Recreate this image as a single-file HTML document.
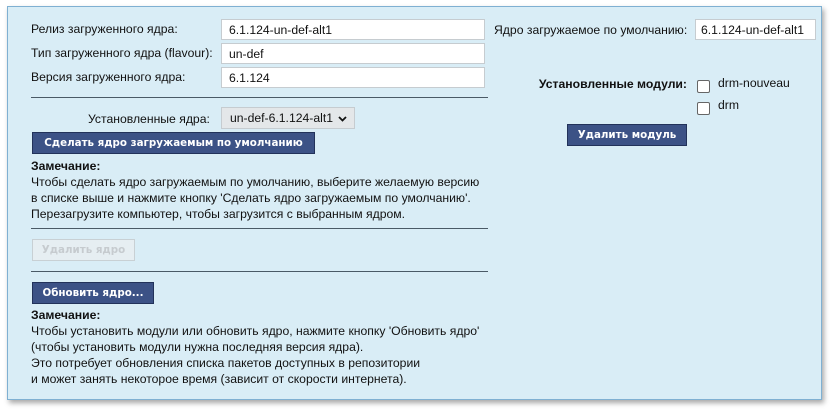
<!DOCTYPE html>
<html><head><meta charset="utf-8"><style>
*{box-sizing:border-box;margin:0;padding:0}
body{width:835px;height:413px;background:#fff;font-family:"Liberation Sans",sans-serif;font-size:12.2px;color:#111;position:relative;overflow:hidden}
.panel{position:absolute;left:7px;top:6px;width:815px;height:394px;background:#d9edf6;border:1px solid #7fb0d2;box-shadow:2px 3px 5px rgba(0,0,0,.35)}
.a{position:absolute;white-space:nowrap}
.inp{position:absolute;background:#fff;border:1px solid #c6ccd0;height:21px;padding-left:7px;line-height:20px}
.hr{position:absolute;height:1px;background:#4a5a66}
.btn{position:absolute;background:#3c5286;border:1px solid #22325a;color:#fff;font-family:"DejaVu Sans",sans-serif;font-weight:bold;font-size:10.3px;text-align:center;line-height:20px}
.dis{position:absolute;background:#e6eef2;border:1px solid #c8d0d4;color:#c6cbcf;font-family:"DejaVu Sans",sans-serif;font-weight:bold;font-size:10.3px;text-align:center;line-height:20px}
.cb{position:absolute;width:13px;height:13px;border:1px solid #666;border-radius:2px;background:#fff}
.t{line-height:16px}
</style></head><body>
<div class="panel"></div>
<div class="a" style="left:31px;top:22px">Релиз загруженного ядра:</div>
<div class="a" style="left:31px;top:46px">Тип загруженного ядра (flavour):</div>
<div class="a" style="left:31px;top:70px">Версия загруженного ядра:</div>
<div class="inp" style="left:221px;top:19px;width:264px">6.1.124-un-def-alt1</div>
<div class="inp" style="left:221px;top:43px;width:264px">un-def</div>
<div class="inp" style="left:221px;top:67px;width:264px">6.1.124</div>
<div class="hr" style="left:31px;top:97px;width:457px"></div>
<div class="a" style="left:88px;top:112px">Установленные ядра:</div>
<div class="a" style="left:221px;top:107px;width:134px;height:22px;background:#e4e7e9;border:1px solid #c6ccd0;padding-left:8px;line-height:21px">un-def-6.1.124-alt1<svg style="position:absolute;right:7px;top:8px" width="9" height="6" viewBox="0 0 9 6"><path d="M1 1L4.5 4.5L8 1" fill="none" stroke="#111" stroke-width="1.8"/></svg></div>
<div class="btn" style="left:32px;top:132px;width:283px;height:22px">Сделать ядро загружаемым по умолчанию</div>
<div class="a t" style="left:31px;top:158px"><b>Замечание:</b><br>Чтобы сделать ядро загружаемым по умолчанию, выберите желаемую версию<br>в списке выше и нажмите кнопку 'Сделать ядро загружаемым по умолчанию'.<br>Перезагрузите компьютер, чтобы загрузится с выбранным ядром.</div>
<div class="hr" style="left:31px;top:228px;width:457px"></div>
<div class="dis" style="left:32px;top:239px;width:103px;height:22px">Удалить ядро</div>
<div class="hr" style="left:31px;top:271px;width:457px"></div>
<div class="btn" style="left:32px;top:282px;width:122px;height:22px">Обновить ядро...</div>
<div class="a t" style="left:31px;top:307px"><b>Замечание:</b><br>Чтобы установить модули или обновить ядро, нажмите кнопку 'Обновить ядро'<br>(чтобы установить модули нужна последняя версия ядра).<br>Это потребует обновления списка пакетов доступных в репозитории<br>и может занять некоторое время (зависит от скорости интернета).</div>
<div class="a" style="left:494px;top:23px">Ядро загружаемое по умолчанию:</div>
<div class="inp" style="left:695px;top:19px;width:121px;padding-left:5px">6.1.124-un-def-alt1</div>
<div class="a" style="right:148px;top:77px;font-weight:bold">Установленные модули:</div>
<div class="cb" style="left:697px;top:80px"></div>
<div class="a" style="left:718px;top:76px">drm-nouveau</div>
<div class="cb" style="left:697px;top:102px"></div>
<div class="a" style="left:718px;top:98px">drm</div>
<div class="btn" style="left:567px;top:124px;width:120px;height:22px">Удалить модуль</div>
</body></html>
